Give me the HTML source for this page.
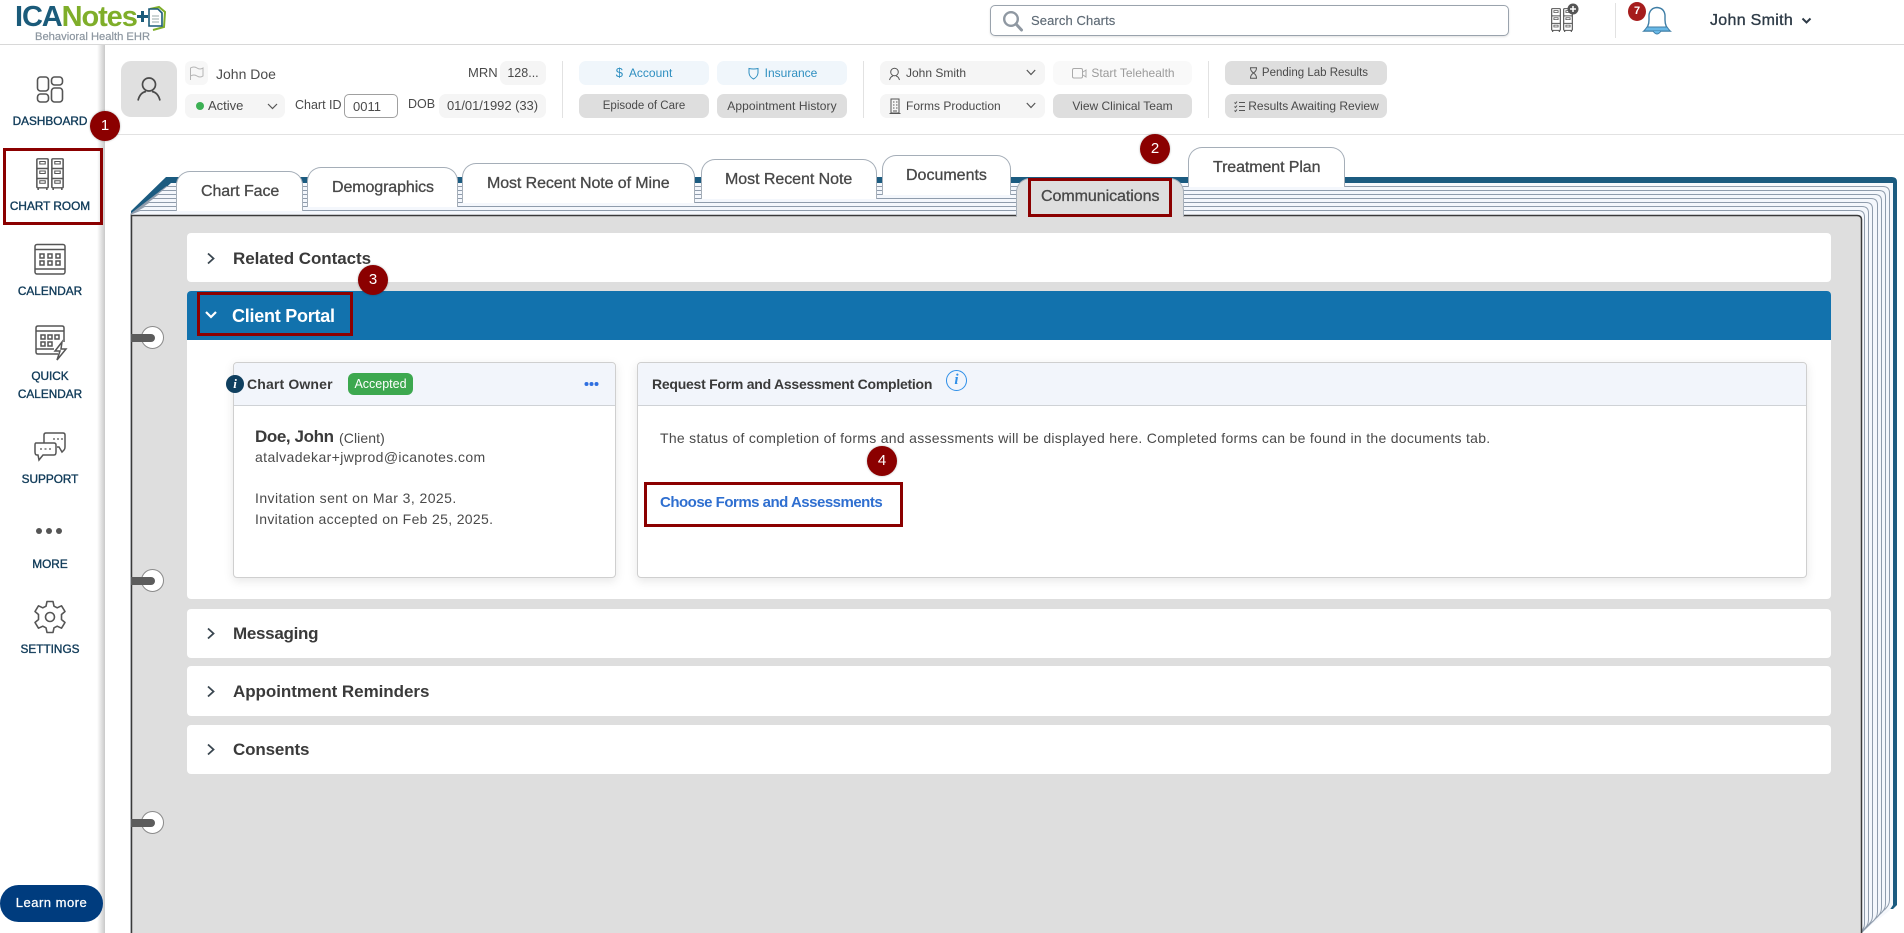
<!DOCTYPE html>
<html><head><meta charset="utf-8"><title>ICANotes</title>
<style>
html,body{margin:0;padding:0;background:#fff;width:1904px;height:933px;overflow:hidden;font-family:"Liberation Sans",sans-serif}
#r{position:relative;width:1904px;height:933px;overflow:hidden}
.a{position:absolute}
.t{position:absolute;white-space:nowrap;line-height:20px;height:20px}
.nav{position:absolute;left:0;width:100px;text-align:center;color:#0f3a58;font-size:11.8px;line-height:18px;-webkit-text-stroke:.35px #0f3a58}
.btn{position:absolute;height:24px;line-height:24px;border-radius:7px;text-align:center;font-size:12px;color:#4a4a4a;background:#dedede;white-space:nowrap}
.lt{background:#f0f6fb;color:#2f8fc0}
.sf{background:#f5f5f5;color:#4a4a4a}
.tab{position:absolute;background:#fff;border:1px solid #a5aeb8;border-bottom:none;border-radius:14px 14px 0 0;box-sizing:border-box}
.tl{position:absolute;white-space:nowrap;line-height:20px;height:20px;font-size:16px;color:#484848;-webkit-text-stroke:.3px #484848}
.p{position:absolute;left:187px;width:1644px;background:#fff;border-radius:4px}
.pt{position:absolute;white-space:nowrap;font-size:17px;line-height:20px;color:#3a3a3a;font-weight:bold}
.m{position:absolute;width:30px;height:30px;border-radius:50%;background:#8b0000;color:#fff;font-size:15px;line-height:30px;text-align:center;box-shadow:0 0 2px rgba(0,0,0,.3)}
.red{position:absolute;border:3px solid #8b0000;box-sizing:border-box}
.card{position:absolute;top:362px;height:216px;background:#fff;border:1px solid #cfcfcf;border-radius:4px;box-sizing:border-box;box-shadow:0 3px 10px rgba(0,0,0,.1)}
.ch{position:absolute;left:0;right:0;top:0;height:42px;background:#f2f5fb;border-bottom:1px solid #cfd2d6;border-radius:4px 4px 0 0}
svg{position:absolute;overflow:visible}
</style></head><body><div id="r">

<!-- top bar -->
<div class="a" style="left:0;top:44px;width:1904px;height:1px;background:#d8d8d8"></div>
<div class="t" style="left:15px;top:2px;height:30px;line-height:30px;font-size:29px;font-weight:bold;letter-spacing:-1.1px;color:#1b5b7a">ICA<span style="color:#7fae2a">Notes</span></div>
<div class="a" style="left:137px;top:15px;width:11px;height:3px;background:#1b5b7a"></div>
<div class="a" style="left:141px;top:11px;width:3px;height:11px;background:#1b5b7a"></div>
<svg style="left:148px;top:6px" width="18" height="25" viewBox="0 0 18 25"><path d="M2 3 L11 1 L17 6 L16 21 L5 24" fill="none" stroke="#7fae2a" stroke-width="2"/><path d="M1 3H10L14 7V20H1Z" fill="#fff" stroke="#1b5b7a" stroke-width="1.600"/><path d="M4 10H11M4 13H11M4 16H11" stroke="#9aa" stroke-width="1"/></svg>
<div class="t" style="left:35px;top:27px;font-size:11.200px;color:#8c96a0;-webkit-text-stroke:.2px #8c96a0">Behavioral Health EHR</div>

<div class="a" style="left:990px;top:5px;width:519px;height:31px;border:1px solid #9aa3ad;border-radius:5px;box-sizing:border-box;box-shadow:0 1px 2px rgba(0,0,0,.12)"></div>
<svg style="left:1002px;top:10px" width="22" height="22" viewBox="0 0 22 22"><circle cx="9" cy="9" r="6.800" fill="none" stroke="#8f98a2" stroke-width="2.400"/><path d="M14 14L19.500 20" stroke="#8f98a2" stroke-width="3" stroke-linecap="round"/></svg>
<div class="t" style="left:1031px;top:11px;font-size:13px;color:#5f6b76;letter-spacing:.1px;-webkit-text-stroke:.15px #5f6b76">Search Charts</div>

<svg width="0" height="0" style="left:0;top:0"><defs><symbol id="cab" viewBox="0 0 12 32"><rect x=".8" y=".8" width="10.400" height="29" rx=".8" fill="none" stroke="#555" stroke-width="1.400"/><path d="M.8 10.500H11.200M.8 20.500H11.200" stroke="#555" stroke-width="1.400"/><path d="M3.500 3.500H8.500V6H3.500ZM3.500 13H8.500V15.500H3.500ZM3.500 22.800H8.500V25.300H3.500Z" fill="none" stroke="#555" stroke-width="1"/><path d="M2 30V32M10 30V32" stroke="#555" stroke-width="1.400"/></symbol></defs></svg>

<svg style="left:1551px;top:8px" width="10" height="24" viewBox="0 0 12 32" preserveAspectRatio="none"><use href="#cab" width="12" height="32"/></svg>
<svg style="left:1563px;top:8px" width="10" height="24" viewBox="0 0 12 32" preserveAspectRatio="none"><use href="#cab" width="12" height="32"/></svg>
<svg style="left:1567px;top:3px" width="12" height="12" viewBox="0 0 12 12"><circle cx="6" cy="6" r="5.500" fill="#555"/><path d="M6 3V9M3 6H9" stroke="#fff" stroke-width="1.500"/></svg>
<div class="a" style="left:1615px;top:3px;width:1px;height:35px;background:#e2e2e2"></div>
<svg style="left:1642px;top:5px" width="30" height="30" viewBox="0 0 30 30"><path d="M2 26Q7 22 7 15V10Q8 3 15 2.500Q22 3 23 10V15Q23 22 28 26Z" fill="none" stroke="#3f7ea6" stroke-width="1.400"/><path d="M5 22H25L28 26H2Z" fill="#68b8e6" stroke="#3f7ea6" stroke-width="1"/><path d="M11 26Q15 32 19 26" fill="#68b8e6" stroke="#3f7ea6"/></svg>
<div class="a" style="left:1628px;top:2px;width:18px;height:19px;border-radius:50%;background:#a61c1c;color:#fff;font-size:11px;font-weight:bold;line-height:19px;text-align:center">7</div>
<div class="t" style="left:1710px;top:11px;font-size:16px;color:#2e3b47;letter-spacing:.3px;-webkit-text-stroke:.35px #2e3b47">John Smith</div>
<svg style="left:1801px;top:17px" width="11" height="8" viewBox="0 0 11 8"><path d="M1.500 1.500L5.500 5.500L9.500 1.500" fill="none" stroke="#2e3b47" stroke-width="2"/></svg>

<!-- sidebar -->
<div class="a" style="left:97px;top:45px;width:8px;height:888px;background:linear-gradient(90deg,rgba(200,200,200,0),#c9c9c9)"></div>

<svg style="left:36px;top:75px" width="28" height="28" viewBox="0 0 28 28" fill="none" stroke="#555" stroke-width="1.600"><rect x="1.500" y="2" width="11" height="14" rx="3"/><rect x="15.500" y="2" width="11" height="8" rx="3"/><rect x="1.500" y="19" width="11" height="8" rx="3"/><rect x="15.500" y="13" width="11" height="14" rx="3"/></svg>
<div class="nav" style="top:112px">DASHBOARD</div>

<svg style="left:36px;top:158px" width="13" height="32" viewBox="0 0 12 32" preserveAspectRatio="none"><use href="#cab" width="12" height="32"/></svg>
<svg style="left:51px;top:158px" width="13" height="32" viewBox="0 0 12 32" preserveAspectRatio="none"><use href="#cab" width="12" height="32"/></svg>
<div class="nav" style="top:197px;left:0;width:100px">CHART ROOM</div>
<div class="red" style="left:3px;top:148px;width:100px;height:77px"></div>

<svg style="left:34px;top:243px" width="32" height="32" viewBox="0 0 32 32" fill="none" stroke="#555" stroke-width="1.500"><rect x="1" y="1.500" width="30" height="29.500" rx="2"/><path d="M1 6.500H31M1 26H31" /><path d="M6 11h4v4H6zM14 11h4v4h-4zM22 11h4v4h-4zM6 18h4v4H6zM14 18h4v4h-4zM22 18h4v4h-4z"/></svg>
<div class="nav" style="top:282px">CALENDAR</div>

<svg style="left:35px;top:325px" width="32" height="36" viewBox="0 0 32 36" fill="none" stroke="#555" stroke-width="1.500"><path d="M23 29H3Q1 29 1 27V3Q1 1 3 1H27Q29 1 29 3V17"/><path d="M1 6H29M1 24H19"/><path d="M6 10h4v4H6zM13 10h4v4h-4zM20 10h4v4h-4zM6 17h4v4H6zM13 17h4v4h-4z"/><path d="M27 17L20 26H25L22 35L31 24H26Z" fill="#fff"/></svg>
<div class="nav" style="top:367px;line-height:18px">QUICK<br>CALENDAR</div>

<svg style="left:34px;top:432px" width="32" height="30" viewBox="0 0 32 30" fill="none" stroke="#555" stroke-width="1.500"><path d="M10 11V3Q10 1 12 1H29Q31 1 31 3V15Q31 17 30 18L28 20L25 15H23"/><path d="M2 11H20Q22 11 22 13V20Q22 23 20 23H9L5 28L4 23H3Q1 23 1 20V13Q1 11 2 11Z" fill="#fff"/><path d="M6 17H8M10.500 17H12.500M15 17H17M19 7H21M23 7H25M27 7H29" stroke-width="1.200"/></svg>
<div class="nav" style="top:470px">SUPPORT</div>

<svg style="left:35px;top:526px" width="28" height="10" viewBox="0 0 28 10"><circle cx="4" cy="5" r="3" fill="#555"/><circle cx="14" cy="5" r="3" fill="#555"/><circle cx="24" cy="5" r="3" fill="#555"/></svg>
<div class="nav" style="top:555px">MORE</div>

<svg style="left:33px;top:600px" width="34" height="34" viewBox="0 0 34 34" fill="none" stroke="#555" stroke-width="1.600"><circle cx="17" cy="17" r="4.500"/><path d="M14 1.500H20L21 6.200L24.200 7.800L28.500 5.800L32 11.500L28.500 14.500V19.500L32 22.500L28.500 28.200L24.200 26.200L21 27.800L20 32.500H14L13 27.800L9.800 26.200L5.500 28.200L2 22.500L5.500 19.500V14.500L2 11.500L5.500 5.800L9.800 7.800L13 6.200Z" stroke-linejoin="round"/></svg>
<div class="nav" style="top:640px">SETTINGS</div>

<div class="a" style="left:0;top:885px;width:103px;height:37px;border-radius:19px;background:#003c7e;color:#fff;text-align:center;line-height:36px;font-size:13px;letter-spacing:.5px;-webkit-text-stroke:.25px #fff">Learn more</div>

<!-- patient header -->
<div class="a" style="left:105px;top:134px;width:1799px;height:1px;background:#e2e2e2"></div>
<div class="a" style="left:121px;top:61px;width:56px;height:56px;background:#e0e0e0;border-radius:10px"></div>
<svg style="left:135px;top:76px" width="28" height="26" viewBox="0 0 28 26" fill="none" stroke="#4a4a4a" stroke-width="1.700"><circle cx="14" cy="8.500" r="6.500"/><path d="M3 24.500Q5 16.500 11 15.500M25 24.500Q23 16.500 17 15.500"/></svg>
<div class="a" style="left:185px;top:61px;width:23px;height:24px;background:#f7f7f7;border-radius:6px"></div>
<svg style="left:189px;top:66px" width="15" height="15" viewBox="0 0 15 15" fill="none" stroke="#b5b5b5" stroke-width="1"><path d="M1.500 14V2Q5 0 8 2T14 2V10Q11 12 8 10T1.500 10"/></svg>
<div class="t" style="left:216px;top:64px;font-size:14px;color:#4c4c4c;">John Doe</div>
<div class="t" style="left:468px;top:63px;font-size:13px;color:#4a4a4a">MRN</div>
<div class="btn sf" style="left:500px;top:61px;width:46px;font-size:12.500px">128...</div>
<div class="btn sf" style="left:185px;top:94px;width:100px"></div>
<div class="a" style="left:196px;top:102px;width:8px;height:8px;border-radius:50%;background:#3cb054"></div>
<div class="t" style="left:208px;top:96px;font-size:13px;color:#4a4a4a">Active</div>
<svg style="left:267px;top:103px" width="11" height="7" viewBox="0 0 11 7"><path d="M1 1L5.500 5.500L10 1" fill="none" stroke="#555" stroke-width="1.200"/></svg>
<div class="t" style="left:295px;top:95px;font-size:12.500px;color:#4a4a4a">Chart ID</div>
<div class="a" style="left:344px;top:94px;width:54px;height:24px;border:1px solid #a0a0a0;border-radius:5px;box-sizing:border-box;font-size:13px;line-height:23px;padding-left:8px;color:#4a4a4a">0011</div>
<div class="t" style="left:408px;top:94px;font-size:12.500px;color:#4a4a4a">DOB</div>
<div class="btn sf" style="left:439px;top:94px;width:107px;font-size:13px;letter-spacing:-.05px">01/01/1992 (33)</div>
<div class="a" style="left:562px;top:61px;width:1px;height:57px;background:#e2e2e2"></div>

<div class="btn lt" style="left:579px;top:61px;width:130px"><span style="font-size:13px">$</span>&nbsp; Account</div>
<div class="btn lt" style="left:717px;top:61px;width:130px"><svg style="left:31px;top:6px" width="11" height="13" viewBox="0 0 11 13"><path d="M1 1.500Q5.500 2.500 10 1.500V6Q9.500 10 5.500 12Q1.500 10 1 6Z" fill="none" stroke="#2f8fc0"/></svg><span style="padding-left:18px">Insurance</span></div>
<div class="btn" style="left:579px;top:94px;width:130px;font-size:11.500px">Episode of Care</div>
<div class="btn" style="left:717px;top:94px;width:130px;letter-spacing:.07px">Appointment History</div>
<div class="a" style="left:863px;top:61px;width:1px;height:57px;background:#e2e2e2"></div>
<div class="btn sf" style="left:880px;top:61px;width:165px"></div>
<svg style="left:888px;top:67px" width="13" height="14" viewBox="0 0 13 14" fill="none" stroke="#555"><circle cx="6.500" cy="5" r="3.800"/><path d="M1.500 13Q2.500 9.500 5 9M11.500 13Q10.500 9.500 8 9"/></svg>
<div class="t" style="left:906px;top:63px;font-size:12px;color:#4a4a4a">John Smith</div>
<svg style="left:1026px;top:69px" width="10" height="7" viewBox="0 0 10 7"><path d="M.800 1L5 5.500L9.200 1" fill="none" stroke="#555" stroke-width="1.200"/></svg>
<div class="btn sf" style="left:880px;top:94px;width:165px"></div>
<svg style="left:889px;top:98px" width="12" height="17" viewBox="0 0 12 17" fill="none" stroke="#555"><path d="M2 1H10V15H2ZM.5 15.500H11.500"/><path d="M4 4H5.500M7 4H8.500M4 7H5.500M7 7H8.500M4 10H5.500M7 10H8.500M4 13H8"/></svg>
<div class="t" style="left:906px;top:96px;font-size:12px;color:#4a4a4a">Forms Production</div>
<svg style="left:1026px;top:102px" width="10" height="7" viewBox="0 0 10 7"><path d="M.800 1L5 5.500L9.200 1" fill="none" stroke="#555" stroke-width="1.200"/></svg>
<div class="btn" style="left:1053px;top:61px;width:139px;background:#f9f9f9;color:#9b9b9b"><svg style="left:19px;top:7px" width="15" height="11" viewBox="0 0 15 11" fill="none" stroke="#aaa"><rect x=".5" y=".5" width="10" height="9.500" rx="1.500"/><path d="M11 4L14 2V9L11 7"/></svg><span style="padding-left:21px">Start Telehealth</span></div>
<div class="btn" style="left:1053px;top:94px;width:139px">View Clinical Team</div>
<div class="a" style="left:1208px;top:61px;width:1px;height:57px;background:#e2e2e2"></div>
<div class="btn" style="left:1225px;top:61px;width:162px;font-size:11.500px"><svg style="left:24px;top:6px" width="9" height="12" viewBox="0 0 9 12" fill="none" stroke="#555"><path d="M1 .8H8M1 11.200H8M1.500 1Q1.500 4 4.500 6Q7.500 8 7.500 11M7.500 1Q7.500 4 4.500 6Q1.500 8 1.500 11"/></svg><span style="padding-left:18px">Pending Lab Results</span></div>
<div class="btn" style="left:1225px;top:94px;width:162px;font-size:12px"><svg style="left:9px;top:7px" width="11" height="11" viewBox="0 0 11 11" fill="none" stroke="#555"><path d="M5 1.500H11M5 5.500H11M5 9.500H11M.5 1.500L1.500 2.500L3 .5M.5 5.500L1.500 6.500L3 4.500M.5 9.500L1.500 10.500L3 8.500"/></svg><span style="padding-left:15px">Results Awaiting Review</span></div>

<!-- book: cover + sheets -->
<svg style="left:0;top:0" width="1904" height="933" viewBox="0 0 1904 933">
<path d="M131 215V211L166 177H1892Q1897 177 1897 182V905L1893 909H131Z" fill="#1b5b80"/>
<path d="M171 183H1893V905L1889 911L1861 933H137V214Z" fill="#f6f8fc"/>
<g fill="#f4f7fc" stroke="#8f9cac" stroke-width="1">
<path d="M166.600 186.500H1883Q1889.500 186.500 1889.500 193V900Q1889.500 906 1883 911L1861 933H131V214Z"/>
</g>
</svg>
<div class="tab" style="left:1188px;top:147px;width:157px;height:40px"></div>
<div class="tl" style="left:1213px;top:158px;letter-spacing:-.1px">Treatment Plan</div>

<svg style="left:0;top:0" width="1904" height="933" viewBox="0 0 1904 933"><path d="M162 190.500H1879Q1885.500 190.500 1885.500 197V904Q1885.500 910 1879 915L1861 933H131V214Z" fill="#f4f7fc" stroke="#8f9cac"/>
<path d="M158 194.500H1875Q1881.500 194.500 1881.500 201V908Q1881.500 914 1875 919L1861 933H131V214Z" fill="#f4f7fc" stroke="#8f9cac"/></svg>
<div class="tab" style="left:882px;top:155px;width:129px;height:40px"></div>
<div class="tl" style="left:906px;top:166px;letter-spacing:0">Documents</div>

<svg style="left:0;top:0" width="1904" height="933" viewBox="0 0 1904 933"><path d="M153 198.500H1871Q1877.500 198.500 1877.500 205V912Q1877.500 918 1871 923L1861 933H131V214Z" fill="#f4f7fc" stroke="#8f9cac"/></svg>
<div class="tab" style="left:701px;top:159px;width:176px;height:40px"></div>
<div class="tl" style="left:725px;top:170px;letter-spacing:-.05px">Most Recent Note</div>

<svg style="left:0;top:0" width="1904" height="933" viewBox="0 0 1904 933"><path d="M149 202.500H1866Q1872.500 202.500 1872.500 209V916Q1872.500 922 1866 927L1861 933H131V214Z" fill="#f4f7fc" stroke="#8f9cac"/></svg>
<div class="tab" style="left:462px;top:163px;width:233px;height:40px"></div>
<div class="tl" style="left:487px;top:174px;letter-spacing:-.1px">Most Recent Note of Mine</div>

<svg style="left:0;top:0" width="1904" height="933" viewBox="0 0 1904 933"><path d="M144.600 206.500H1862Q1868.500 206.500 1868.500 213V920Q1868.500 926 1862 931L1861 933H131V214Z" fill="#f4f7fc" stroke="#8f9cac"/></svg>
<div class="tab" style="left:307px;top:167px;width:151px;height:40px"></div>
<div class="tl" style="left:332px;top:178px;letter-spacing:-.1px">Demographics</div>

<svg style="left:0;top:0" width="1904" height="933" viewBox="0 0 1904 933"><path d="M140 210.500H1858Q1864.500 210.500 1864.500 217V924Q1864.500 930 1858 933H131V214Z" fill="#f4f7fc" stroke="#8f9cac"/></svg>
<div class="tab" style="left:176px;top:171px;width:127px;height:40px"></div>
<div class="tl" style="left:201px;top:182px;letter-spacing:-.1px">Chart Face</div>

<!-- page -->
<svg style="left:0;top:0" width="1904" height="933" viewBox="0 0 1904 933"><path d="M131.500 933V215.500H1857Q1861.500 215.500 1861.500 220V933" fill="#dedede" stroke="#3a3a3a" stroke-width="1.500"/></svg>
<div class="tab" style="left:1016px;top:178px;width:168px;height:38px;background:#dedede;border-bottom:none"></div>
<div class="a" style="left:1017px;top:214px;width:166px;height:3px;background:#dedede"></div>
<div class="tl" style="left:1041px;top:187px;letter-spacing:-.05px">Communications</div>
<div class="red" style="left:1028px;top:178px;width:144px;height:39px"></div>

<!-- rings -->
<div class="a" style="left:140.500px;top:325.500px;width:23px;height:23px;border-radius:50%;background:#fff;border:1px solid #8a8a8a;box-sizing:border-box"></div>
<div class="a" style="left:131px;top:334px;width:24px;height:8px;background:#5c5c5c;border-radius:0 4px 4px 0"></div>
<div class="a" style="left:140.500px;top:568.500px;width:23px;height:23px;border-radius:50%;background:#fff;border:1px solid #8a8a8a;box-sizing:border-box"></div>
<div class="a" style="left:131px;top:577px;width:24px;height:8px;background:#5c5c5c;border-radius:0 4px 4px 0"></div>
<div class="a" style="left:140.500px;top:810.500px;width:23px;height:23px;border-radius:50%;background:#fff;border:1px solid #8a8a8a;box-sizing:border-box"></div>
<div class="a" style="left:131px;top:819px;width:24px;height:8px;background:#5c5c5c;border-radius:0 4px 4px 0"></div>

<!-- panels -->
<div class="p" style="top:233px;height:49px"></div>
<svg style="left:206px;top:252px" width="10" height="13" viewBox="0 0 10 13"><path d="M2 1.500L7.500 6.500L2 11.500" fill="none" stroke="#3a4650" stroke-width="1.800"/></svg>
<div class="pt" style="left:233px;top:249px;letter-spacing:-.05px">Related Contacts</div>

<div class="p" style="top:291px;height:308px"></div>
<div class="p" style="top:291px;height:49px;background:#1272ad;border-radius:4px 4px 0 0"></div>
<svg style="left:204px;top:310px" width="14" height="10" viewBox="0 0 14 10"><path d="M2 2L7 7L12 2" fill="none" stroke="#fff" stroke-width="2.200"/></svg>
<div class="pt" style="left:232px;top:306px;color:#fff;font-size:18px;letter-spacing:-.25px">Client Portal</div>
<div class="red" style="left:197px;top:292px;width:156px;height:44px"></div>

<div class="card" style="left:233px;width:383px"><div class="ch"></div></div>
<div class="a" style="left:226px;top:375px;width:18px;height:18px;border-radius:50%;background:#0f3f5f;color:#fff;font:italic bold 13px/18px 'Liberation Serif',serif;text-align:center">i</div>
<div class="t" style="left:247px;top:374px;font-size:14px;font-weight:bold;color:#3a3a3a;letter-spacing:.15px">Chart Owner</div>
<div class="a" style="left:348px;top:373px;width:65px;height:22px;border-radius:6px;background:#3da84f;color:#fff;font-size:12.500px;line-height:22px;text-align:center">Accepted</div>
<svg style="left:584px;top:381px" width="15" height="6" viewBox="0 0 15 6"><circle cx="2.500" cy="3" r="2" fill="#2f6fe0"/><circle cx="7.500" cy="3" r="2" fill="#2f6fe0"/><circle cx="12.500" cy="3" r="2" fill="#2f6fe0"/></svg>
<div class="t" style="left:255px;top:427px;font-size:17px;font-weight:bold;color:#3a3a3a;letter-spacing:-.4px">Doe, John</div>
<div class="t" style="left:339px;top:428px;font-size:14px;color:#4a4a4a;letter-spacing:.1px">(Client)</div>
<div class="t" style="left:255px;top:447px;font-size:14px;color:#4a4a4a;letter-spacing:.39px">atalvadekar+jwprod@icanotes.com</div>
<div class="t" style="left:255px;top:488px;font-size:14px;color:#4a4a4a;letter-spacing:.43px">Invitation sent on Mar 3, 2025.</div>
<div class="t" style="left:255px;top:509px;font-size:14px;color:#4a4a4a;letter-spacing:.33px">Invitation accepted on Feb 25, 2025.</div>

<div class="card" style="left:637px;width:1170px"><div class="ch"></div></div>
<div class="t" style="left:652px;top:374px;font-size:14px;font-weight:bold;color:#3a3a3a;letter-spacing:-.25px">Request Form and Assessment Completion</div>
<div class="a" style="left:946px;top:370px;width:21px;height:21px;border-radius:50%;border:1.500px solid #2f8fe8;box-sizing:border-box;color:#2f8fe8;font:italic bold 15px/18px 'Liberation Serif',serif;text-align:center">i</div>
<div class="t" style="left:660px;top:428px;font-size:14px;color:#4a4a4a;letter-spacing:.29px">The status of completion of forms and assessments will be displayed here. Completed forms can be found in the documents tab.</div>
<div class="t" style="left:660px;top:493px;font-size:15px;font-weight:bold;color:#2f6fd0;letter-spacing:-.5px">Choose Forms and Assessments</div>
<div class="red" style="left:644px;top:482px;width:259px;height:45px"></div>

<div class="p" style="top:609px;height:49px"></div>
<svg style="left:206px;top:627px" width="10" height="13" viewBox="0 0 10 13"><path d="M2 1.500L7.500 6.500L2 11.500" fill="none" stroke="#3a4650" stroke-width="1.800"/></svg>
<div class="pt" style="left:233px;top:624px;letter-spacing:-.3px">Messaging</div>
<div class="p" style="top:666px;height:50px"></div>
<svg style="left:206px;top:685px" width="10" height="13" viewBox="0 0 10 13"><path d="M2 1.500L7.500 6.500L2 11.500" fill="none" stroke="#3a4650" stroke-width="1.800"/></svg>
<div class="pt" style="left:233px;top:682px;letter-spacing:-.05px">Appointment Reminders</div>
<div class="p" style="top:725px;height:49px"></div>
<svg style="left:206px;top:743px" width="10" height="13" viewBox="0 0 10 13"><path d="M2 1.500L7.500 6.500L2 11.500" fill="none" stroke="#3a4650" stroke-width="1.800"/></svg>
<div class="pt" style="left:233px;top:740px;letter-spacing:-.15px">Consents</div>

<!-- markers -->
<div class="m" style="left:90px;top:111px">1</div>
<div class="m" style="left:1140px;top:134px">2</div>
<div class="m" style="left:358px;top:265px">3</div>
<div class="m" style="left:867px;top:446px">4</div>
</div></body></html>
